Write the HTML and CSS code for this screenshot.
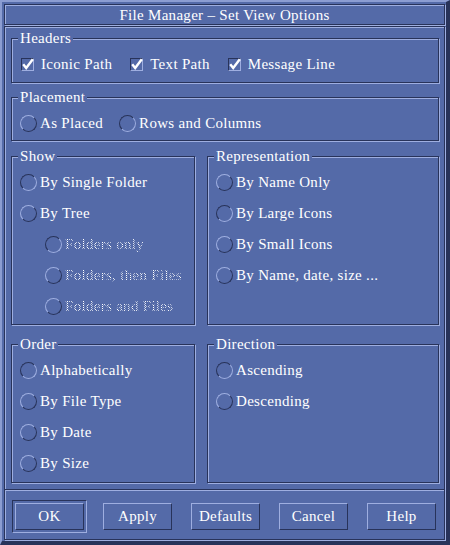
FILE: index.html
```html
<!DOCTYPE html>
<html>
<head>
<meta charset="utf-8">
<title>File Manager – Set View Options</title>
<link rel="stylesheet" href="styles.css">
</head>
<body>
<div class="window">
  <div class="titlebar">File Manager – Set View Options</div>
  <div class="dialog">
    <div class="groups">
      <div class="group g-headers">
        <div class="legend">Headers</div>
        <div class="hrow">
          <span class="opt"><span class="cbox"><svg width="13" height="13" viewBox="0 0 13 13"><path d="M2.2 6.2 L5.2 10 L11.8 1.2" fill="none" stroke="#ffffff" stroke-width="2.4"/></svg></span><span class="lbl">Iconic Path</span></span>
          <span class="opt"><span class="cbox"><svg width="13" height="13" viewBox="0 0 13 13"><path d="M2.2 6.2 L5.2 10 L11.8 1.2" fill="none" stroke="#ffffff" stroke-width="2.4"/></svg></span><span class="lbl">Text Path</span></span>
          <span class="opt"><span class="cbox"><svg width="13" height="13" viewBox="0 0 13 13"><path d="M2.2 6.2 L5.2 10 L11.8 1.2" fill="none" stroke="#ffffff" stroke-width="2.4"/></svg></span><span class="lbl">Message Line</span></span>
        </div>
      </div>

      <div class="group g-place">
        <div class="legend">Placement</div>
        <div class="hrow place-row">
          <span class="opt"><span class="radio"></span><span class="lbl">As Placed</span></span>
          <span class="opt"><span class="radio on"></span><span class="lbl">Rows and Columns</span></span>
        </div>
      </div>

      <div class="pair pair-top">
        <div class="group g-show">
          <div class="legend">Show</div>
          <div class="list">
            <span class="opt"><span class="radio on"></span><span class="lbl">By Single Folder</span></span>
            <span class="opt"><span class="radio"></span><span class="lbl">By Tree</span></span>
            <span class="opt sub"><span class="radio on"></span><span class="lbl dis">Folders only</span></span>
            <span class="opt sub"><span class="radio"></span><span class="lbl dis">Folders, then Files</span></span>
            <span class="opt sub"><span class="radio"></span><span class="lbl dis">Folders and Files</span></span>
          </div>
        </div>
        <div class="group g-rep">
          <div class="legend">Representation</div>
          <div class="list">
            <span class="opt"><span class="radio"></span><span class="lbl">By Name Only</span></span>
            <span class="opt"><span class="radio on"></span><span class="lbl">By Large Icons</span></span>
            <span class="opt"><span class="radio"></span><span class="lbl">By Small Icons</span></span>
            <span class="opt"><span class="radio"></span><span class="lbl">By Name, date, size ...</span></span>
          </div>
        </div>
      </div>

      <div class="pair pair-bottom">
        <div class="group g-order">
          <div class="legend">Order</div>
          <div class="list">
            <span class="opt"><span class="radio on"></span><span class="lbl">Alphabetically</span></span>
            <span class="opt"><span class="radio"></span><span class="lbl">By File Type</span></span>
            <span class="opt"><span class="radio"></span><span class="lbl">By Date</span></span>
            <span class="opt"><span class="radio"></span><span class="lbl">By Size</span></span>
          </div>
        </div>
        <div class="group g-dir">
          <div class="legend">Direction</div>
          <div class="list">
            <span class="opt"><span class="radio on"></span><span class="lbl">Ascending</span></span>
            <span class="opt"><span class="radio"></span><span class="lbl">Descending</span></span>
          </div>
        </div>
      </div>
    </div>

    <div class="sep"></div>

    <div class="buttons">
      <span class="default-ring"><span class="btn">OK</span></span>
      <span class="btn">Apply</span>
      <span class="btn">Defaults</span>
      <span class="btn">Cancel</span>
      <span class="btn">Help</span>
    </div>
  </div>
</div>
</body>
</html>
```

FILE: styles.css
```css
* { box-sizing: border-box; }

html, body {
  margin: 0;
  padding: 0;
}

body {
  width: 450px;
  height: 545px;
  background: #546aa8;
  font-family: "Liberation Serif", "Times New Roman", serif;
  font-size: 15px;
  letter-spacing: 0.3px;
  color: #ffffff;
  overflow: hidden;
}

.window {
  width: 450px;
  height: 545px;
  border-style: solid;
  border-width: 2px 4px 4px 2px;
  border-color: #8c9dd2 #28335a #28335a #8c9dd2;
  padding: 2px 1px 1px 2px;
  display: flex;
  flex-direction: column;
  background: #546aa8;
}

.titlebar {
  height: 21px;
  margin-bottom: 1px;
  border: 1px solid #28335a;
  box-shadow: inset 1px 1px 0 #9eaee0, 1px 1px 0 #9eaee0;
  text-align: center;
  line-height: 19px;
  padding-top: 1px;
  white-space: nowrap;
}

.dialog {
  height: 514px;
  border: 1px solid #28335a;
  box-shadow: inset 1px 1px 0 #9eaee0, 1px 1px 0 #9eaee0;
  display: flex;
  flex-direction: column;
}

.groups {
  padding: 11px 5px 0 6px;
  display: flex;
  flex-direction: column;
}

.group {
  border: 1px solid #28335a;
  box-shadow: inset 1px 1px 0 #9eaee0, 1px 1px 0 #9eaee0;
  padding: 0 0 0 8px;
  display: flex;
  flex-direction: column;
  min-width: 0;
}

.legend {
  align-self: flex-start;
  margin: -9px 0 0 -2px;
  padding: 0 2px;
  height: 16px;
  line-height: 16px;
  background: #546aa8;
  white-space: nowrap;
}

.g-headers { height: 45px; margin-bottom: 14px; }
.g-place { height: 44px; margin-bottom: 15px; }

.pair {
  display: grid;
  grid-template-columns: 184px 232px;
  column-gap: 12px;
}
.pair-top { height: 169px; margin-bottom: 19px; }
.pair-bottom { height: 139px; }

.hrow {
  display: flex;
  gap: 17px;
  margin-top: 3px;
}
.place-row { gap: 16px; }

.list {
  display: flex;
  flex-direction: column;
  margin-top: 3px;
}

.opt {
  height: 31px;
  display: flex;
  align-items: center;
  white-space: nowrap;
}

.opt.sub { padding-left: 25px; }

.radio {
  flex: none;
  width: 17px;
  height: 17px;
  border-radius: 50%;
  border: 1px solid;
  border-color: #9eaee0 #28335a #28335a #9eaee0;
  margin-right: 3px;
}
.radio.on {
  border-color: #28335a #9eaee0 #9eaee0 #28335a;
}

.cbox {
  flex: none;
  width: 13px;
  height: 13px;
  margin: 0 7px 0 1px;
  border: 1px solid;
  border-color: #28335a #9eaee0 #9eaee0 #28335a;
  position: relative;
}
.cbox svg {
  position: absolute;
  left: -1px;
  top: -1px;
  overflow: visible;
}

.dis {
  background: repeating-conic-gradient(#ffffff 0 25%, transparent 0 50%) 0 0 / 2px 2px;
  -webkit-background-clip: text;
  background-clip: text;
  color: transparent;
}

.sep {
  margin-top: 6px;
  height: 2px;
  border-top: 1px solid #28335a;
  border-bottom: 1px solid #9eaee0;
}

.buttons {
  margin-top: 9px;
  height: 33px;
  padding-left: 10px;
  display: flex;
  align-items: center;
  gap: 19px;
}

.default-ring {
  display: flex;
  border: 1px solid;
  border-color: #28335a #9eaee0 #9eaee0 #28335a;
  padding: 2px;
  margin: 0 -3px;
}

.btn {
  flex: none;
  width: 69px;
  height: 27px;
  border: 1px solid;
  border-color: #9eaee0 #28335a #28335a #9eaee0;
  display: flex;
  align-items: center;
  justify-content: center;
  white-space: nowrap;
}
```
